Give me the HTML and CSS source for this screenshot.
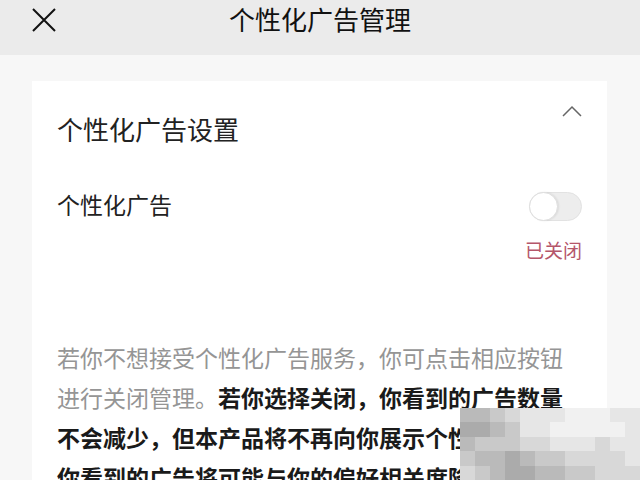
FILE: index.html
```html
<!DOCTYPE html>
<html lang="zh-CN">
<head>
    <meta charset="UTF-8">
    <meta name="viewport" content="width=device-width, initial-scale=1.0">
    <title>个性化广告管理</title>
    <link rel="stylesheet" href="styles.css">
</head>
<body>
    <header class="topbar">
        <button class="close-btn" aria-label="关闭">
            <svg width="24" height="24" viewBox="0 0 24 24">
                <path d="M1 1 L23 23 M23 1 L1 23" stroke="#111" stroke-width="2" fill="none"/>
            </svg>
        </button>
        <h1 class="title">个性化广告管理</h1>
        <span></span>
    </header>

    <main class="page">
        <section class="card">
            <div class="card-head">
                <h2>个性化广告设置</h2>
                <svg class="chevron" width="20" height="12" viewBox="0 0 20 12">
                    <path d="M1 11 L10 2 L19 11" stroke="#666" stroke-width="1.5" fill="none"/>
                </svg>
            </div>

            <div class="setting-row">
                <span class="setting-label">个性化广告</span>
                <span class="switch"><span class="knob"></span></span>
            </div>
            <div class="status">已关闭</div>

            <p class="desc">若你不想接受个性化广告服务，你可点击相应按钮进行关闭管理。<strong>若你选择关闭，你看到的广告数量不会减少，但本产品将不再向你展示个性化广告，你看到的广告将可能与你的偏好相关度降低。</strong></p>
        </section>
    </main>

    <!-- pixelated watermark in the corner -->
    <div class="mosaic">
        <i class="s2"></i><i class="s2"></i><i class="s3"></i><i class="s4"></i><i class="s5"></i><i class="s5"></i><i class="s5"></i><i class="s6"></i><i class="s6"></i><i class="s6"></i><i class="s5"></i><i class="s5"></i>
        <i class="s1"></i><i class="s1"></i><i class="s2"></i><i class="s3"></i><i class="s5"></i><i class="s5"></i><i class="s6"></i><i class="s6"></i><i class="s6"></i><i class="s6"></i><i class="s6"></i><i class="s5"></i>
        <i class="s2"></i><i class="s3"></i><i class="s3"></i><i class="s3"></i><i class="s4"></i><i class="s4"></i><i class="s5"></i><i class="s5"></i><i class="s5"></i><i class="s4"></i><i class="s5"></i><i class="s5"></i>
        <i class="s3"></i><i class="s2"></i><i class="s2"></i><i class="s1"></i><i class="s2"></i><i class="s3"></i><i class="s3"></i><i class="s4"></i><i class="s4"></i><i class="s4"></i><i class="s4"></i><i class="s5"></i>
        <i class="s4"></i><i class="s3"></i><i class="s2"></i><i class="s1"></i><i class="s1"></i><i class="s2"></i><i class="s2"></i><i class="s3"></i><i class="s3"></i><i class="s4"></i><i class="s4"></i><i class="s4"></i>
    </div>
</body>
</html>
```

FILE: styles.css
```css
body {
    margin: 0;
    background-color: #f7f7f7;
    font-family: "Noto Sans CJK SC", "Noto Sans", sans-serif;
    color: #1a1a1a;
    overflow: hidden;
}

.topbar {
    height: 55px;
    background-color: #ebebeb;
    display: grid;
    grid-template-columns: 1fr auto 1fr;
    align-items: start;
    padding: 4px 0 0 32px;
    box-sizing: border-box;
}

.close-btn {
    width: 24px;
    height: 24px;
    margin-top: 4px;
    padding: 0;
    border: none;
    background: none;
    display: block;
}

.title {
    margin: 0 32px 0 0;
    font-size: 26px;
    line-height: 30px;
    font-weight: normal;
    color: #111;
}

.page {
    padding: 26px 33px 0 32px;
}

.card {
    background: #fff;
    padding: 0 25px;
    height: 400px;
}

.card-head {
    display: flex;
    justify-content: space-between;
    align-items: flex-start;
    padding-top: 30px;
}

.card-head h2 {
    margin: 0;
    font-size: 26px;
    line-height: 36px;
    font-weight: normal;
    color: #222;
}

.chevron {
    margin-top: -6px;
}

.setting-row {
    display: flex;
    justify-content: space-between;
    align-items: center;
    margin-top: 41px;
    height: 32px;
}

.setting-label {
    font-size: 23px;
    line-height: 32px;
    color: #222;
}

.switch {
    position: relative;
    width: 53px;
    height: 29px;
    margin-top: 4px;
    border-radius: 15px;
    background-color: #ededed;
    border: 1px solid #e2e2e2;
    box-sizing: border-box;
}

.knob {
    position: absolute;
    left: -1px;
    top: -1px;
    width: 29px;
    height: 29px;
    border-radius: 50%;
    background: #fff;
    border: 1px solid #dedede;
    box-sizing: border-box;
    box-shadow: 1px 0 2px rgba(0,0,0,0.08);
}

.status {
    margin-top: 18px;
    text-align: right;
    font-size: 19px;
    line-height: 24px;
    color: #b5566a;
}

.desc {
    margin: 75px 0 0;
    font-size: 23px;
    line-height: 40px;
    color: #959595;
}

.desc strong {
    color: #1a1a1a;
}

.mosaic {
    position: absolute;
    left: 460px;
    top: 408px;
    width: 180px;
    height: 72px;
    display: grid;
    grid-template-columns: repeat(12, 1fr);
    grid-template-rows: repeat(5, 1fr);
}

.mosaic i { display: block; }
.s1 { background: #ababab; }
.s2 { background: #bababa; }
.s3 { background: #c9c9c9; }
.s4 { background: #d8d8d8; }
.s5 { background: #e6e6e6; }
.s6 { background: #f1f1f1; }
```
